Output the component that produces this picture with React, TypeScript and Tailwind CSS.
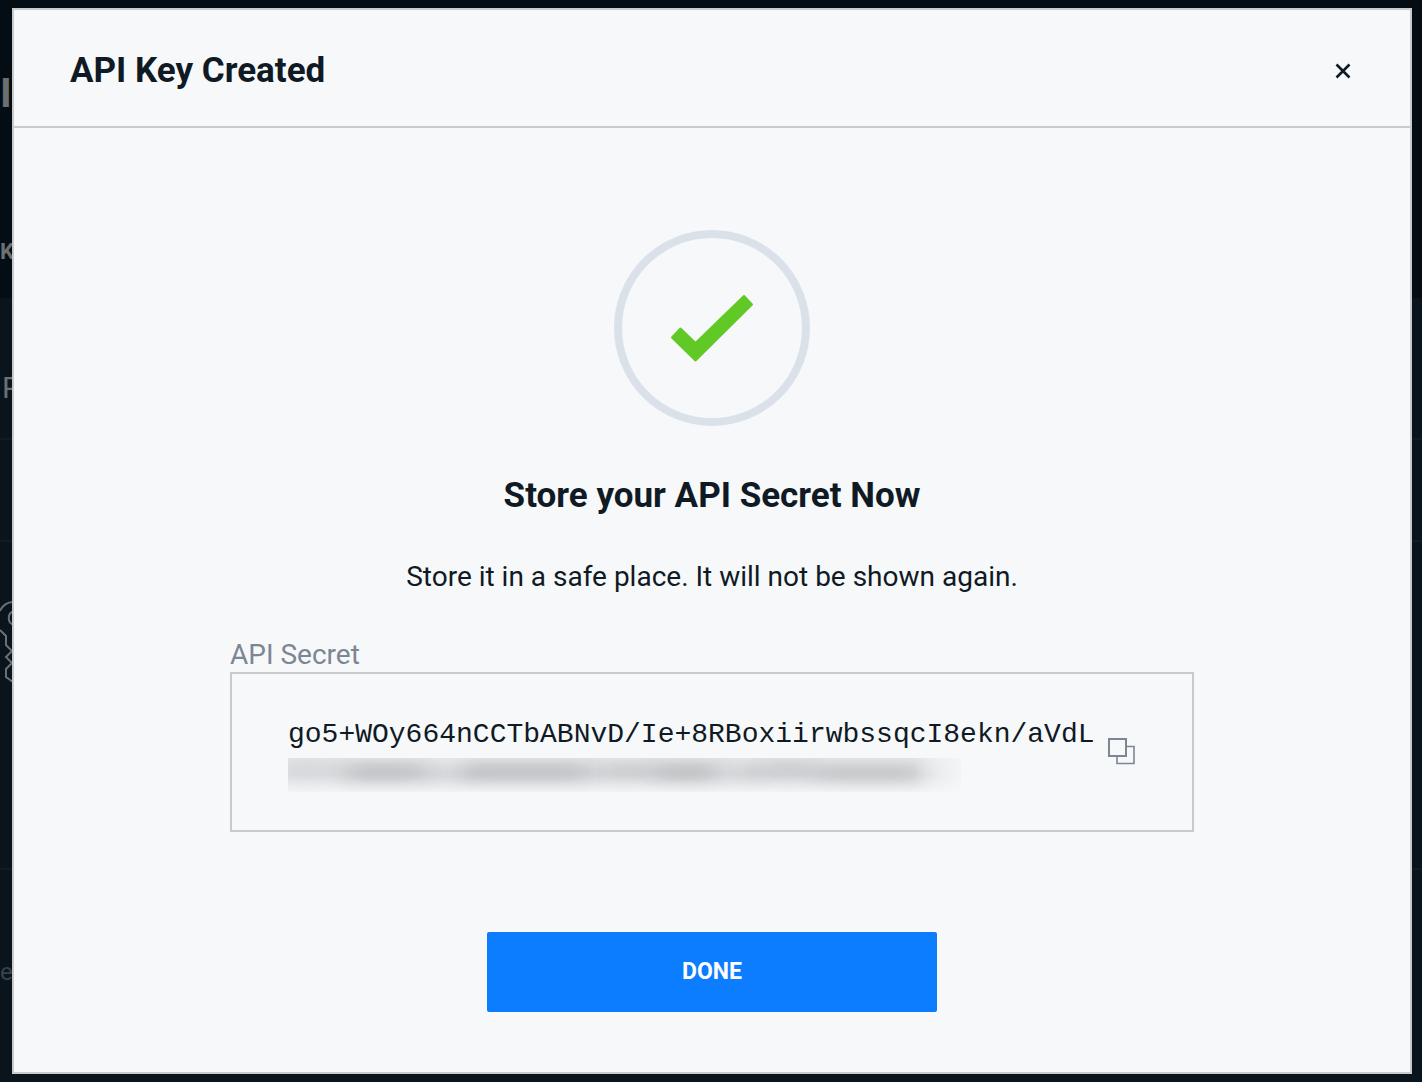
import { useState } from 'react'

const SECRET = 'go5+WOy664nCCTbABNvD/Ie+8RBoxiirwbssqcI8ekn/aVdL'

// [x, y, width, height, opacity] of the smudges hiding the second line
const smudges = [
  [-10, 0, 60, 22, 0.06],
  [56, 4, 82, 20, 0.16],
  [140, 8, 50, 16, 0.08],
  [180, 4, 122, 20, 0.16],
  [310, 4, 54, 18, 0.12],
  [366, 4, 66, 20, 0.17],
  [445, 4, 30, 20, 0.1],
  [476, 2, 50, 20, 0.12],
  [528, 6, 105, 18, 0.15],
]

function CheckMark() {
  return (
    <svg className="h-[84px] w-[84px]" viewBox="0 0 84 84" aria-hidden="true">
      <path
        d="M10.5 42.5 25.5 57 74 10 82 18.5 25.5 74.5 2 51.5Z"
        fill="#61c926"
        stroke="#61c926"
        strokeWidth="2"
        strokeLinejoin="round"
      />
    </svg>
  )
}

function CopyIcon() {
  return (
    <svg className="h-7 w-7" viewBox="0 0 28 28" fill="none" stroke="#7d8694" strokeWidth="2" aria-hidden="true">
      <path strokeWidth="1.6" d="M19 8.5h7v17H9v-6.5" />
      <path d="M1 1h17v17H1z" />
    </svg>
  )
}

function CloseIcon() {
  return (
    <svg className="h-4 w-4" viewBox="0 0 16 16" fill="none" stroke="#101a24" strokeWidth="2.6" aria-hidden="true">
      <path d="M1.5 1.5l13 13M14.5 1.5l-13 13" />
    </svg>
  )
}

function HiddenLine() {
  return (
    <svg className="h-[34px] w-[673px] max-w-full" viewBox="0 0 673 34" aria-hidden="true">
      <defs>
        <filter id="smudge" filterUnits="userSpaceOnUse" x="-60" y="-40" width="793" height="114">
          <feGaussianBlur stdDeviation="12 7" />
        </filter>
        <linearGradient id="veil" x1="0" y1="0" x2="0" y2="1">
          <stop offset="0" stopColor="#101a24" stopOpacity="0.07" />
          <stop offset="0.5" stopColor="#101a24" stopOpacity="0.09" />
          <stop offset="1" stopColor="#101a24" stopOpacity="0.02" />
        </linearGradient>
        <linearGradient id="fade" x1="0" y1="0" x2="1" y2="0">
          <stop offset="0.93" stopColor="#f7f8fa" stopOpacity="0" />
          <stop offset="1" stopColor="#f7f8fa" stopOpacity="0.8" />
        </linearGradient>
      </defs>
      <rect width="673" height="34" fill="url(#veil)" />
      {smudges.map(([x, y, w, h, o]) => (
        <rect key={x} x={x} y={y} width={w} height={h} fill="#14181e" opacity={o} filter="url(#smudge)" />
      ))}
      <rect width="673" height="34" fill="url(#fade)" />
    </svg>
  )
}

// Dimmed page behind the dialog, only its edges stay visible
function Backdrop() {
  return (
    <div aria-hidden="true" className="absolute inset-0 overflow-hidden bg-[#0a141c] text-[#6b7073]">
      <div className="h-[298px] bg-[#050d14]">
        <div className="h-[232px] pt-[74px] text-[40px] leading-10 font-bold">I</div>
        <div className="text-[22px] leading-10 font-bold">K</div>
      </div>
      <div className="h-[142px] border-b-2 border-[#111b23] pt-[70px] pl-[2px] text-[30px] leading-10">P</div>
      <div className="h-[102px] border-b-2 border-[#111b23]" />
      <div className="h-[328px] border-b-2 border-[#111b23] pt-[56px]">
        <svg className="h-[90px] w-[30px]" viewBox="0 0 30 90" fill="none" stroke="currentColor" strokeWidth="2">
          <path d="M13 4C7 4 2 8 0 13M0 32l6 6v9l6 6-6 6 6 6-6 6v8l7 5" />
          <path d="M14 13c-7 2-7 12 0 14" />
        </svg>
      </div>
      <div className="pt-[82px] text-[24px] leading-10 text-[#3a4249]">e</div>
    </div>
  )
}

export default function App() {
  const [open, setOpen] = useState(true)

  const handleCopy = () => {
    navigator.clipboard?.writeText(SECRET)
  }

  return (
    <div className="relative min-h-screen font-['Roboto','Liberation_Sans',sans-serif] text-[#101a24]">
      <Backdrop />

      {open && (
        <div className="relative py-2 pr-[10px] pl-3">
          <section
            role="dialog"
            aria-labelledby="dialog-title"
            className="border-2 border-[#c9cacc] bg-[#f7f8fa]"
          >
            {/* Header */}
            <header className="flex items-center justify-between border-b-2 border-[#c9cacc] px-14 pt-[41px] pb-[35px]">
              <h1 id="dialog-title" className="text-[35px] leading-10 font-bold">
                API Key Created
              </h1>
              <button type="button" aria-label="Close" onClick={() => setOpen(false)} className="cursor-pointer pr-[3px]">
                <CloseIcon />
              </button>
            </header>

            {/* Content */}
            <div className="flex flex-col items-center px-6 pt-[102px] pb-[60px]">
              <div className="flex h-[196px] w-[196px] items-center justify-center rounded-full border-8 border-[#dbe1e9]">
                <CheckMark />
              </div>

              <h2 className="mt-[50px] text-center text-[35px] leading-10 font-bold">
                Store your API Secret Now
              </h2>
              <p className="mt-[41px] text-center text-[28px] leading-10">
                Store it in a safe place. It will not be shown again.
              </p>

              <div className="mt-[42px] w-full max-w-[964px]">
                <div className="text-[28px] leading-8 text-[#7d8694]">API Secret</div>
                <div className="mt-px flex items-center justify-between border-2 border-[#c9cacc] px-14 py-[35px]">
                  <div className="min-w-0 pt-[6px]">
                    <div className="font-['Liberation_Mono',monospace] text-[28px] leading-10 break-all">
                      {SECRET}
                    </div>
                    <div className="flex h-10 items-center">
                      <HiddenLine />
                    </div>
                  </div>
                  <button type="button" aria-label="Copy API secret" onClick={handleCopy} className="shrink-0 cursor-pointer">
                    <CopyIcon />
                  </button>
                </div>
              </div>

              <button
                type="button"
                onClick={() => setOpen(false)}
                className="mt-[100px] h-20 w-[450px] max-w-full cursor-pointer rounded-xs bg-[#0d7dff] text-[23px] font-bold text-white"
              >
                DONE
              </button>
            </div>
          </section>
        </div>
      )}
    </div>
  )
}
